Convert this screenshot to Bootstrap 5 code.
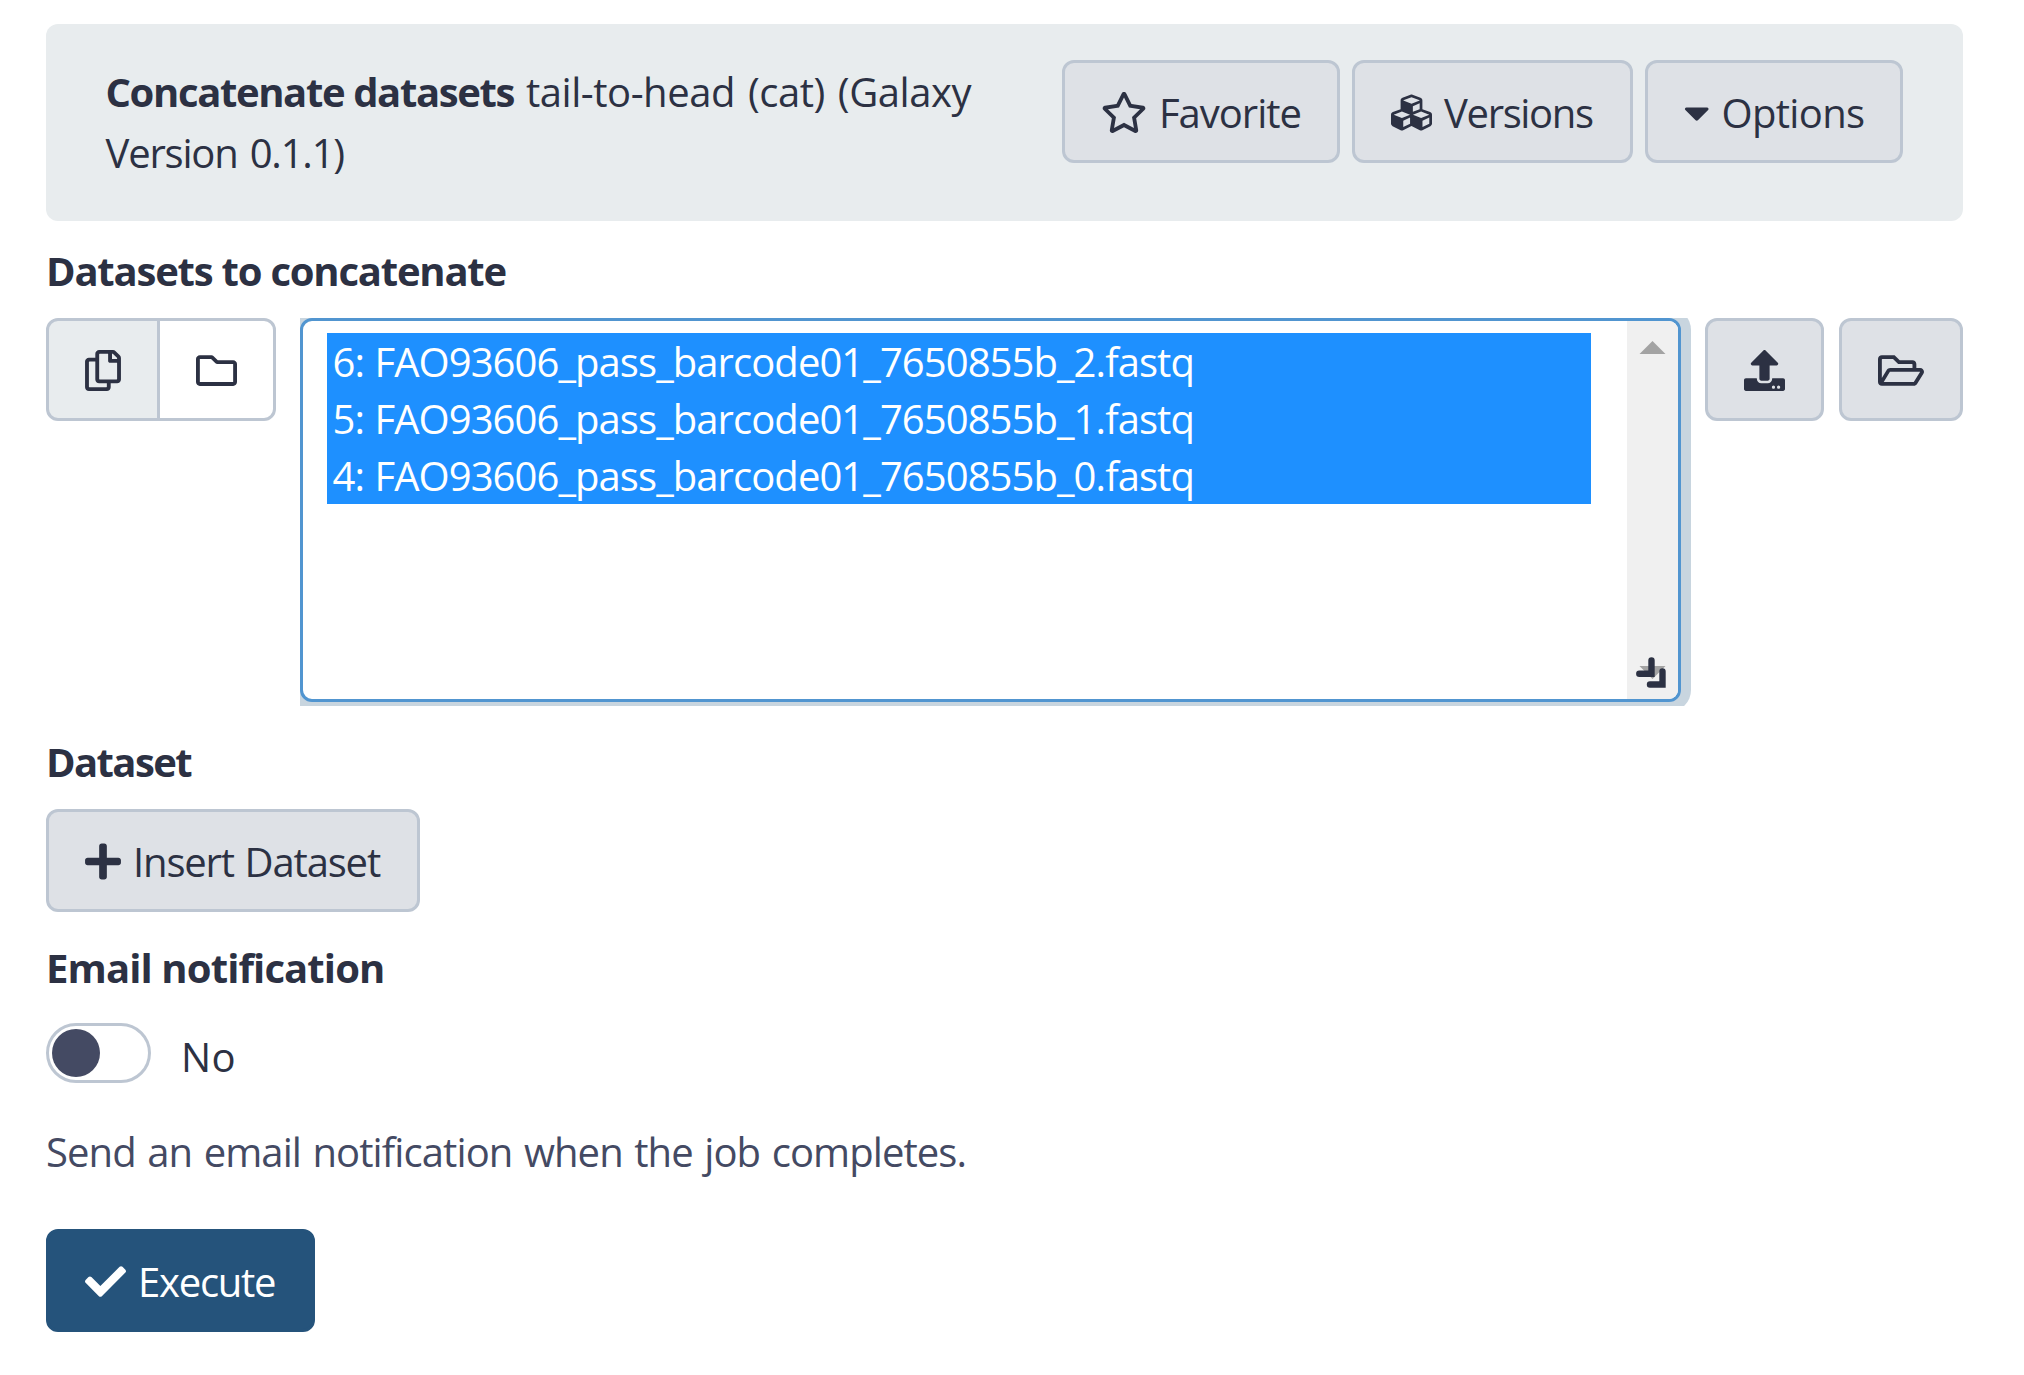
<!DOCTYPE html>
<html lang="en">
<head>
<meta charset="utf-8">
<meta name="viewport" content="width=device-width, initial-scale=1">
<title>Concatenate datasets</title>
<link href="https://cdn.jsdelivr.net/npm/bootstrap@5.3.0/dist/css/bootstrap.min.css" rel="stylesheet">
<style>
  body { font-family: "Open Sans", "Noto Sans", sans-serif; font-size: 40px; line-height: 60px; letter-spacing: -.9px; color: #2c3143; background: #fff; }
  .tool-form { padding: 24px 61px 0 46px; }
  .tool-head { height: 197px; padding: 36px 60px 0 59.5px; margin-bottom: 20px; background: #e8ecee; border-radius: 12px; }
  .tool-title { width: 900px; margin: 1px 0 0; font-size: 40px; line-height: 61px; font-weight: 400; letter-spacing: -.45px; word-spacing: 3px; }
  .tool-title b { letter-spacing: -1.37px; word-spacing: 0; margin-right: -1px; }
  .tool-title .ver { letter-spacing: -1.2px; }
  .head-actions { gap: 12px; }
  .btn-tool { --bs-btn-color: #2c3143; --bs-btn-bg: #dee1e6; --bs-btn-border-color: #bdc6d2; --bs-btn-hover-bg: #d2d6dc; --bs-btn-hover-border-color: #bdc6d2;
    --bs-btn-font-size: 40px; --bs-btn-line-height: 60px; --bs-btn-padding-x: 36px; --bs-btn-padding-y: 0px; --bs-btn-border-width: 3px; --bs-btn-border-radius: 12px;
    display: inline-flex; align-items: center; height: 103px; gap: 12px; padding-top: 2px; white-space: nowrap; }
  .btn-tool svg { height: 41px; flex: none; fill: currentColor; }
  .btn-fav { width: 278px; letter-spacing: -1.02px; }
  .btn-ver { width: 281px; letter-spacing: -1.34px; }
  .btn-opt { width: 258px; letter-spacing: -.67px; }
  .btn-ins { width: 374px; letter-spacing: -1.16px; word-spacing: 1.5px; }
  .btn-exec { --bs-btn-color: #fff; --bs-btn-bg: #25537b; --bs-btn-border-color: #25537b; --bs-btn-hover-color: #fff; --bs-btn-hover-bg: #1c4060; width: 269px; letter-spacing: -1.25px; }
  .btn-src { justify-content: center; --bs-btn-bg: #fff; width: 119px; }
  .btn-src.on { --bs-btn-bg: #e8ecee; width: 114px; }
  .src-group { height: 103px; margin-right: 24px; }
  .src-group > .btn-src:last-child { margin-left: -3px !important; }
  .btn-up { width: 119px; justify-content: center; margin: 0 15px 0 14px; }
  .btn-open { width: 124px; justify-content: center; }
  .form-title { display: block; height: 60px; margin-bottom: 17px; font-weight: 700; letter-spacing: -1.21px; }
  .title-dataset { margin-top: 26px; letter-spacing: -1.6px; }
  .title-email { margin: 26px 0 25px; letter-spacing: -.88px; }
  .select-wrap { width: 1391px; height: 388px; overflow: hidden; }
  .select-box { width: 1381px; height: 384px; border: 3px solid #5195d0; border-radius: 12px; box-shadow: 0 0 0 10px #c8d5df; background: #fff; overflow: hidden; }
  .opt-list { width: 1264px; margin: 12px 36px 0 24px; }
  .opt-list li { height: 57px; line-height: 57px; padding-left: 5.5px; background: #1e90ff; color: #fff; letter-spacing: -.93px; word-spacing: 1px; }
  .scroll-track { width: 51px; background: #f0f0f0; }
  .scroll-track svg { display: block; }
  .toggle-track { width: 105px; height: 60px; border: 3px solid #bdc6d2; border-radius: 30px; padding: 3px; }
  .toggle-knob { width: 48px; height: 48px; border-radius: 50%; background: #444a63; }
  .toggle-text { margin: 4px 0 -4px 30px; letter-spacing: .4px; }
  .help-text { color: #444a63; letter-spacing: -.91px; word-spacing: 2px; margin: 39px 0 47px; }
</style>
</head>
<body>
<main class="tool-form">
  <header class="tool-head d-flex justify-content-between align-items-start">
    <h1 class="tool-title"><b>Concatenate datasets</b> tail-to-head (cat) (Galaxy<br><span class="ver">Version 0.1.1)</span></h1>
    <div class="head-actions d-flex flex-shrink-0">
      <button type="button" class="btn btn-tool btn-fav">
        <svg viewBox="0 0 576 512" width="46"><path d="M528.1 171.5L382 150.2 316.7 17.8c-11.7-23.6-45.6-23.9-57.4 0L194 150.2 47.9 171.5c-26.2 3.8-36.7 36.1-17.7 54.6l105.7 103-25 145.5c-4.5 26.3 23.2 46 46.4 33.7L288 439.6l130.7 68.7c23.2 12.2 50.9-7.4 46.4-33.7l-25-145.5 105.7-103c19-18.5 8.5-50.8-17.7-54.6zM388.6 312.3l23.7 138.4L288 385.4l-124.3 65.3 23.7-138.4-100.6-98 139-20.2 62.2-126 62.2 126 139 20.2-100.6 98z"/></svg><span>Favorite</span></button>
      <button type="button" class="btn btn-tool btn-ver">
        <svg viewBox="0 0 512 512" width="41"><path d="M488.6 250.2L392 214V105.5c0-15-9.3-28.4-23.4-33.7l-100-37.5c-8.1-3.1-17.1-3.1-25.3 0l-100 37.5c-14.1 5.3-23.4 18.7-23.4 33.7V214l-96.6 36.2C9.3 255.5 0 268.9 0 283.9V394c0 13.6 7.7 26.1 19.9 32.2l100 50c10.1 5.1 22.1 5.1 32.2 0l103.9-52 103.9 52c10.1 5.1 22.1 5.1 32.2 0l100-50c12.2-6.1 19.9-18.6 19.9-32.2V283.9c0-15-9.3-28.4-23.4-33.7zM358 214.8l-85 31.9v-68.2l85-37v73.3zM154 104.1l102-38.2 102 38.2v.6l-102 41.4-102-41.4v-.6zm84 291.1l-85 42.5v-79.1l85-38.8v75.4zm0-112l-102 41.4-102-41.4v-.6l102-38.2 102 38.2v.6zm240 112l-85 42.5v-79.1l85-38.8v75.4zm0-112l-102 41.4-102-41.4v-.6l102-38.2 102 38.2v.6z"/></svg><span>Versions</span></button>
      <button type="button" class="btn btn-tool btn-opt">
        <svg viewBox="0 0 320 512" width="25.5"><path d="M31.3 192h257.3c17.8 0 26.7 21.5 14.1 34.1L174.1 354.8c-7.8 7.8-20.5 7.8-28.3 0L17.2 226.1C4.6 213.5 13.5 192 31.3 192z"/></svg><span>Options</span></button>
    </div>
  </header>

  <label class="form-title">Datasets to concatenate</label>
  <div class="d-flex align-items-start">
    <div class="btn-group src-group flex-shrink-0" role="group">
      <button type="button" class="btn btn-tool btn-src on" aria-label="Multiple datasets">
        <svg viewBox="0 0 448 512" width="36"><path d="M433.941 65.941l-51.882-51.882A48 48 0 0 0 348.118 0H176c-26.51 0-48 21.49-48 48v48H48c-26.51 0-48 21.49-48 48v320c0 26.51 21.49 48 48 48h224c26.51 0 48-21.49 48-48v-48h80c26.51 0 48-21.49 48-48V99.882a48 48 0 0 0-14.059-33.941zM266 464H54a6 6 0 0 1-6-6V150a6 6 0 0 1 6-6h74v224c0 26.51 21.49 48 48 48h96v42a6 6 0 0 1-6 6zm128-96H182a6 6 0 0 1-6-6V54a6 6 0 0 1 6-6h106v88c0 13.255 10.745 24 24 24h88v202a6 6 0 0 1-6 6zm6-256h-64V48h9.632c1.591 0 3.117.632 4.243 1.757l48.368 48.368a6 6 0 0 1 1.757 4.243V112z"/></svg></button>
      <button type="button" class="btn btn-tool btn-src" aria-label="Dataset collection">
        <svg viewBox="0 0 512 512" width="41"><path d="M464 128H272l-54.63-54.63c-6-6-14.14-9.37-22.63-9.37H48C21.49 64 0 85.49 0 112v288c0 26.51 21.49 48 48 48h416c26.51 0 48-21.49 48-48V176c0-26.51-21.49-48-48-48zm0 272H48V112h140.12l54.63 54.63c6 6 14.14 9.37 22.63 9.37H464v224z"/></svg></button>
    </div>
    <div class="select-wrap flex-shrink-0">
      <div class="select-box d-flex">
        <ul class="opt-list list-unstyled flex-shrink-0">
          <li>6: FAO93606_pass_barcode01_7650855b_2.fastq</li>
          <li>5: FAO93606_pass_barcode01_7650855b_1.fastq</li>
          <li>4: FAO93606_pass_barcode01_7650855b_0.fastq</li>
        </ul>
        <div class="scroll-track flex-shrink-0">
          <svg width="51" height="378" viewBox="0 0 51 378">
            <path d="M12.5 33L25.5 20L38.5 33zM12.5 345H38.5L25.5 358z" fill="#a3a3a3"/>
            <path d="M24.5 339.5V352.7H12.3M35.5 350.500V363.5H23" fill="none" stroke="#2c3143" stroke-width="6.4" stroke-linecap="round"/>
          </svg>
        </div>
      </div>
    </div>
    <button type="button" class="btn btn-tool btn-up flex-shrink-0" aria-label="Upload">
      <svg viewBox="0 0 512 512" width="41"><path d="M296 384h-80c-13.3 0-24-10.7-24-24V192h-87.7c-17.8 0-26.7-21.5-14.1-34.1L242.3 5.7c7.5-7.5 19.8-7.5 27.3 0l152.2 152.2c12.6 12.6 3.7 34.1-14.1 34.1H320v168c0 13.3-10.7 24-24 24zm216-8v112c0 13.3-10.7 24-24 24H24c-13.3 0-24-10.7-24-24V376c0-13.3 10.7-24 24-24h136v8c0 30.9 25.1 56 56 56h80c30.9 0 56-25.1 56-56v-8h136c13.3 0 24 10.7 24 24zm-124 88c0-11-9-20-20-20s-20 9-20 20 9 20 20 20 20-9 20-20zm64 0c0-11-9-20-20-20s-20 9-20 20 9 20 20 20 20-9 20-20z"/></svg></button>
    <button type="button" class="btn btn-tool btn-open flex-shrink-0" aria-label="Browse">
      <svg viewBox="0 0 576 512" width="46"><path d="M527.9 224H480v-48c0-26.5-21.5-48-48-48H272l-64-64H48C21.5 64 0 85.5 0 112v288c0 26.5 21.5 48 48 48h400c16.5 0 31.9-8.5 40.7-22.6l79.9-128c20-31.9-3-73.4-40.7-73.4zM48 118c0-3.3 2.7-6 6-6h134.1l64 64H426c3.3 0 6 2.7 6 6v42H152c-16.8 0-32.4 8.8-41.1 23.2L48 351.4zm400 282H72l77.2-128H528z"/></svg></button>
  </div>

  <label class="form-title title-dataset">Dataset</label>
  <button type="button" class="btn btn-tool btn-ins d-flex">
    <svg viewBox="0 0 448 512" width="36"><path d="M416 208H272V64c0-17.67-14.33-32-32-32h-32c-17.67 0-32 14.33-32 32v144H32c-17.67 0-32 14.33-32 32v32c0 17.67 14.33 32 32 32h144v144c0 17.67 14.33 32 32 32h32c17.67 0 32-14.33 32-32V304h144c17.67 0 32-14.33 32-32v-32c0-17.67-14.33-32-32-32z"/></svg><span>Insert Dataset</span></button>

  <label class="form-title title-email">Email notification</label>
  <div class="d-flex align-items-start">
    <div class="toggle-track" role="switch" aria-checked="false"><div class="toggle-knob"></div></div>
    <span class="toggle-text">No</span>
  </div>
  <p class="help-text">Send an email notification when the job completes.</p>

  <button type="button" class="btn btn-tool btn-exec d-flex">
    <svg viewBox="0 0 512 512" width="41"><path d="M173.898 439.404l-166.4-166.4c-9.997-9.997-9.997-26.206 0-36.204l36.203-36.204c9.997-9.998 26.207-9.998 36.204 0L192 312.69 432.095 72.596c9.997-9.997 26.207-9.997 36.204 0l36.203 36.204c9.997 9.997 9.997 26.206 0 36.204l-294.4 294.401c-9.998 9.997-26.207 9.997-36.204-.001z"/></svg><span>Execute</span></button>
</main>
<script src="https://cdn.jsdelivr.net/npm/bootstrap@5.3.0/dist/js/bootstrap.bundle.min.js"></script>
</body>
</html>
